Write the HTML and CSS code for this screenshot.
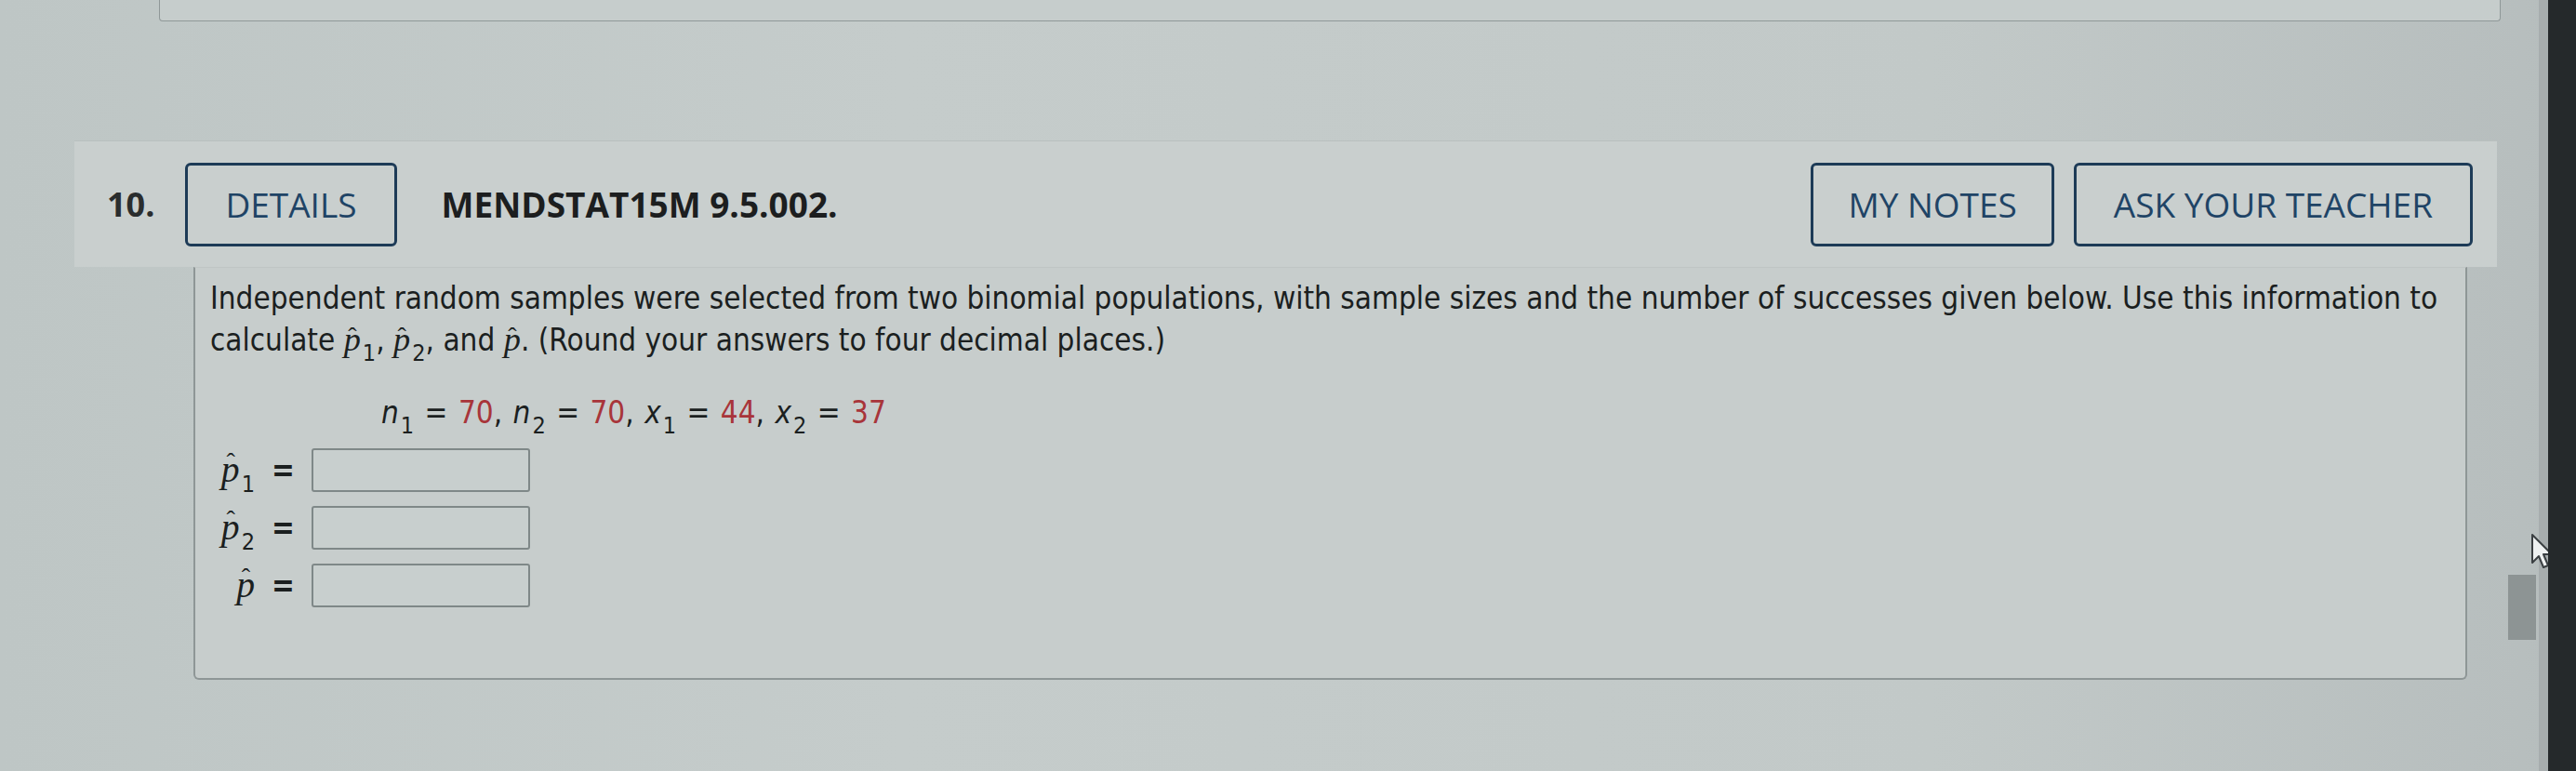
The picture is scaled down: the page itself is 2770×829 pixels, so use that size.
FILE: index.html
```html
<!DOCTYPE html>
<html lang="en">
<head>
    <meta charset="UTF-8">
    <title>Question 10</title>
    <link rel="stylesheet" href="styles.css">
</head>
<body>
    <div class="screen">
        <div class="page">
            <div class="prev-card"></div>

            <div class="question">
                <div class="q-head">
                    <span class="q-num">10.</span>
                    <button class="btn">DETAILS</button>
                    <span class="q-code">MENDSTAT15M 9.5.002.</span>
                    <div class="q-actions">
                        <button class="btn">MY NOTES</button>
                        <button class="btn">ASK YOUR TEACHER</button>
                    </div>
                </div>

                <div class="q-body">
                    <p class="q-text">Independent random samples were selected from two binomial populations, with sample sizes and the number of successes given below. Use this information to<br>calculate <span class="hat"><i>p</i></span><sub>1</sub>, <span class="hat"><i>p</i></span><sub>2</sub>, and <span class="hat"><i>p</i></span>. (Round your answers to four decimal places.)</p>

                    <p class="q-given"><i>n</i><sub>1</sub> = <span class="val">70</span>, <i>n</i><sub>2</sub> = <span class="val">70</span>, <i>x</i><sub>1</sub> = <span class="val">44</span>, <i>x</i><sub>2</sub> = <span class="val">37</span></p>

                    <div class="answers">
                        <div class="answer-row">
                            <span class="ans-label"><span class="hat"><i>p</i></span><sub>1</sub></span>
                            <span class="eq">=</span>
                            <input type="text" class="ans-box">
                        </div>
                        <div class="answer-row">
                            <span class="ans-label"><span class="hat"><i>p</i></span><sub>2</sub></span>
                            <span class="eq">=</span>
                            <input type="text" class="ans-box">
                        </div>
                        <div class="answer-row">
                            <span class="ans-label"><span class="hat"><i>p</i></span></span>
                            <span class="eq">=</span>
                            <input type="text" class="ans-box">
                        </div>
                    </div>
                </div>
            </div>
        </div>

        <div class="scrollbar">
            <div class="thumb"></div>
        </div>
        <div class="edge"></div>

        <svg class="cursor" width="26" height="40" viewBox="0 0 26 40">
            <path d="M2 2 L2 32 L9 25 L14 37 L19 35 L14 23 L23 23 Z" fill="#eef1f1" stroke="#3a3f42" stroke-width="2" stroke-linejoin="round"/>
        </svg>
    </div>
</body>
</html>
```

FILE: styles.css
```css
body {
    margin: 0;
    font-family: "DejaVu Sans", Verdana, sans-serif;
    color: #1b1f1f;
}

.screen {
    display: flex;
    width: 2770px;
    height: 829px;
    overflow: hidden;
    position: relative;
    background: linear-gradient(to right, #bec6c5, #c5cccb 35%, #c2c9c8 75%, #b6bdbd);
}

.page {
    width: 2694px;
    flex-shrink: 0;
}

/* bottom of the previous question card */
.prev-card {
    margin-left: 171px;
    width: 2516px;
    height: 22px;
    border: 1px solid #8f9898;
    border-top: none;
    border-radius: 0 0 4px 4px;
    background: #c6cdcc;
}

.question {
    margin: 128px 0 0 80px;
    width: 2605px;
}

.q-head {
    display: flex;
    align-items: center;
    height: 136px;
    padding: 0 26px 0 35px;
    background: #c9cfce;
    border-top: 1px solid #b9c0bf;
    box-sizing: border-box;
}

.q-num {
    font-family: "Open Sans", sans-serif;
    font-weight: bold;
    font-size: 36px;
    color: #2a2d2e;
    margin-right: 33px;
}

.btn {
    font-family: "Open Sans", sans-serif;
    font-size: 37px;
    color: #1f4466;
    background: transparent;
    height: 90px;
    padding: 0 40px;
    border: 3px solid #1d3b57;
    border-radius: 6px;
}

.q-code {
    font-family: "Open Sans", sans-serif;
    font-weight: bold;
    font-size: 37px;
    color: #1c1e1f;
    margin-left: 48px;
}

.q-actions {
    margin-left: auto;
    display: flex;
    gap: 21px;
}

.q-actions .btn:first-child {
    padding: 0 37px;
}

.q-body {
    margin-left: 128px;
    width: 2445px;
    height: 444px;
    box-sizing: border-box;
    padding: 11px 16px;
    background: #c7cdcc;
    border: 2px solid #8e9696;
    border-top: 1px solid #bfc5c4;
    border-radius: 0 0 6px 6px;
}

.q-text {
    margin: 0;
    font-size: 33px;
    font-stretch: condensed;
    line-height: 44px;
    white-space: nowrap;
}

sub {
    font-size: 0.76em;
    vertical-align: -0.42em;
    line-height: 0;
    margin-left: 0.08em;
}

.hat {
    position: relative;
    display: inline-block;
}

.hat i {
    font-family: "Liberation Serif", serif;
    font-size: 1.1em;
}

.hat::before {
    content: "\02C6";
    position: absolute;
    left: 0.16em;
    top: -0.12em;
    font-family: "Liberation Serif", serif;
    font-size: 0.85em;
}

.q-given {
    margin: 34px 0 0 184px;
    font-size: 33px;
    font-stretch: condensed;
    line-height: 44px;
    word-spacing: 2px;
}

.val {
    color: #a8353a;
}

.answers {
    margin-top: 8px;
}

.answer-row {
    display: flex;
    align-items: center;
    height: 62px;
    font-size: 33px;
    font-stretch: condensed;
}

.ans-label {
    width: 48px;
    text-align: right;
}

.ans-label .hat i {
    font-size: 1.2em;
}

.ans-label .hat::before {
    top: -0.02em;
    left: 0.2em;
}

.eq {
    margin: 0 18px 0 18px;
    font-weight: bold;
}

.ans-box {
    width: 235px;
    height: 47px;
    box-sizing: border-box;
    border: 2px solid #7f8888;
    border-radius: 3px;
    background: #c8cfce;
}

.scrollbar {
    width: 46px;
    flex-shrink: 0;
    box-sizing: border-box;
    border-right: 10px solid #a7adae;
    padding-top: 618px;
}

.thumb {
    margin-left: 3px;
    width: 30px;
    height: 70px;
    background: #8d9494;
}

.edge {
    flex: 1;
    background: #25292b;
    position: relative;
    z-index: 2;
}

.cursor {
    position: absolute;
    left: 2721px;
    top: 573px;
}
```
